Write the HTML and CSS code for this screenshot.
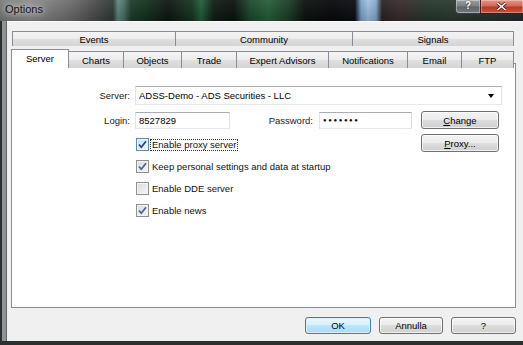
FILE: index.html
```html
<!DOCTYPE html>
<html lang="en">
<head>
  <meta charset="UTF-8" />
  <title>Options</title>
  <link rel="stylesheet" href="styles.css">
</head>
<body>

  <div class="window">
    <div class="titlebar">
      <span class="title">Options</span>
      <div class="caption-buttons">
        <span class="cap-help">?</span>
        <span class="cap-close">
          <svg width="11" height="9" viewBox="0 0 11 9">
            <path d="M1.5 1 L9.5 8 M9.5 1 L1.5 8" stroke="#5a1a12" stroke-width="3" />
            <path d="M1.5 1 L9.5 8 M9.5 1 L1.5 8" stroke="#fff" stroke-width="1.6" />
          </svg>
        </span>
      </div>
    </div>

    <div class="frame">
      <div class="client">

        <div class="tabs">
          <div class="tab-row upper">
            <div class="tab w-events">Events</div>
            <div class="tab w-community">Community</div>
            <div class="tab w-signals last">Signals</div>
          </div>
          <div class="tab-row lower">
            <div class="tab selected w-server">Server</div>
            <div class="tab w-charts">Charts</div>
            <div class="tab w-objects">Objects</div>
            <div class="tab w-trade">Trade</div>
            <div class="tab w-experts">Expert Advisors</div>
            <div class="tab w-notify">Notifications</div>
            <div class="tab w-email">Email</div>
            <div class="tab w-ftp last">FTP</div>
          </div>
        </div>

        <div class="panel">
          <div class="field-row">
            <span class="label">Server:</span>
            <div class="combo">
              <span class="combo-text">ADSS-Demo - ADS Securities - LLC</span>
              <span class="combo-arrow"></span>
            </div>
          </div>

          <div class="field-row login-row">
            <span class="label">Login:</span>
            <div class="textbox login">8527829</div>
            <span class="label pass-label">Password:</span>
            <div class="textbox password"><span class="dots">●●●●●●●</span></div>
            <button class="btn side-btn"><u>C</u>hange</button>
          </div>

          <div class="lower">
            <div class="checks">
              <div class="check-row">
                <span class="check focused">
                  <svg width="9" height="9" viewBox="0 0 9 9"><path d="M1 4.5 L3.3 7.2 L8 1.2" fill="none" stroke="#2a3f86" stroke-width="1.7" /></svg>
                </span>
                <span class="check-label focus-rect">Enable proxy server</span>
              </div>
              <div class="check-row">
                <span class="check">
                  <svg width="9" height="9" viewBox="0 0 9 9"><path d="M1 4.5 L3.3 7.2 L8 1.2" fill="none" stroke="#4a5d96" stroke-width="1.7" /></svg>
                </span>
                <span class="check-label">Keep personal settings and data at startup</span>
              </div>
              <div class="check-row">
                <span class="check"></span>
                <span class="check-label">Enable DDE server</span>
              </div>
              <div class="check-row">
                <span class="check">
                  <svg width="9" height="9" viewBox="0 0 9 9"><path d="M1 4.5 L3.3 7.2 L8 1.2" fill="none" stroke="#4a5d96" stroke-width="1.7" /></svg>
                </span>
                <span class="check-label">Enable news</span>
              </div>
            </div>
            <button class="btn side-btn proxy"><u>P</u>roxy...</button>
          </div>
        </div>

        <div class="footer">
          <button class="btn foot-btn default w-ok">OK</button>
          <button class="btn foot-btn w-cancel">Annulla</button>
          <button class="btn foot-btn w-help">?</button>
        </div>

      </div>
    </div>
  </div>

</body>
</html>
```

FILE: styles.css
```css
html, body {
  margin: 0;
  padding: 0;
  height: 100%;
  background: #1d2020;
  overflow: hidden;
  font-family: 'Liberation Sans', Arial, sans-serif;
  font-size: 9.5px;
  line-height: 11px;
  color: #000;
}

.window {
  width: 523px;
  height: 345px;
  display: grid;
  grid-template-rows: 21px 1fr;
}

/* glass title bar over the blurred chart */
.titlebar {
  display: flex;
  justify-content: space-between;
  align-items: flex-start;
  overflow: hidden;
  background:
    linear-gradient(180deg, rgba(255, 255, 255, 0.06), rgba(0, 0, 0, 0.18)),
    linear-gradient(90deg,
      #7a7c7b 0px, #8d8e8d 30px, #6d6e6d 70px, #424443 102px,
      #2f3b37 113px, #5d8a80 118px, #4b7068 124px, #1d3d2a 131px,
      #11301c 148px, #0f1612 168px, #163521 192px, #22603a 201px,
      #0f1d14 214px, #0b120e 234px, #1b4a2d 250px, #266039 268px,
      #1b4029 288px, #0c110f 305px, #07090c 330px, #0a0d13 355px,
      #7da4ca 361px, #9fc3e6 368px, #86a9cc 376px, #2b2325 382px,
      #3b2b2c 400px, #26392d 428px, #2b3a31 455px, #222a2b 523px);
}

.title {
  font-size: 11px;
  line-height: 13px;
  color: #151515;
  padding: 3px 0 0 5px;
  text-shadow: 0 0 5px #d8d8d8, 0 0 9px rgba(255, 255, 255, 0.7);
}

.caption-buttons {
  display: flex;
}

.cap-help {
  width: 25px;
  height: 14px;
  box-sizing: border-box;
  border: 1px solid #3a3e40;
  border-top: none;
  border-right: none;
  border-bottom-left-radius: 4px;
  background: linear-gradient(#9aa0a4, #7b8286 45%, #5f666a 55%, #757c80);
  box-shadow: inset 0 0 0 1px rgba(255, 255, 255, 0.35);
  color: #fff;
  font-weight: bold;
  font-size: 10px;
  text-align: center;
  line-height: 12px;
  text-shadow: 0 0 2px #222;
}

.cap-close {
  width: 43px;
  height: 14px;
  box-sizing: border-box;
  border: 1px solid #4a1810;
  border-top: none;
  border-right: none;
  background: linear-gradient(#e09a8a, #cf6a55 45%, #b93a24 55%, #c9533c);
  box-shadow: inset 0 0 0 1px rgba(255, 255, 255, 0.3);
  display: flex;
  align-items: center;
  justify-content: center;
  padding-right: 2px;
}

.frame {
  display: flex;
  padding: 0 0 4px 7px;
  background:
    linear-gradient(#2d3031, #2d3031) bottom / 100% 4px no-repeat,
    linear-gradient(90deg, #2c2f30 0 2px, #8f9497 2px 6px, #5f6365 6px 7px);
}

.client {
  flex: 1;
  background: #f0f0f0;
  border-top: 1px solid #fbfbfb;
  padding: 9px 0 0 4px;
}

/* tabs */
.tabs {
  display: grid;
  grid-template-rows: 15px 17px;
}

.tab-row {
  display: flex;
  align-items: flex-start;
  min-height: 0;
}

.tab-row.upper {
  margin-left: 1px;
}

.tab {
  box-sizing: border-box;
  height: 15px;
  border: 1px solid #898c95;
  border-right: none;
  border-bottom: none;
  display: flex;
  align-items: center;
  justify-content: center;
  background: linear-gradient(#f4f4f4, #ececec 50%, #e0e0e0 50%, #d4d4d4);
}

.lower .tab {
  height: 17px;
}

.tab.last {
  border-right: 1px solid #898c95;
}

.lower .tab.selected {
  position: relative;
  z-index: 1;
  height: 19px;
  margin-top: -2px;
  margin-bottom: -2px;
  padding-bottom: 2px;
  background: #fff;
  border-right: 1px solid #898c95;
}

.tab.selected + .tab {
  border-left: none;
}

.w-events { width: 163px; }
.w-community { width: 177px; }
.w-signals { width: 162px; }
.w-server { width: 58px; }
.w-charts { width: 54px; }
.w-objects { width: 58px; }
.w-trade { width: 55px; }
.w-experts { width: 92px; }
.w-notify { width: 79px; }
.w-email { width: 54px; }
.w-ftp { width: 53px; }

/* page */
.panel {
  width: 505px;
  height: 245px;
  box-sizing: border-box;
  border: 1px solid #898c95;
  background: #fff;
  padding-top: 22px;
}

.field-row {
  display: flex;
  align-items: center;
  height: 19px;
}

.login-row {
  height: 18px;
  margin-top: 6px;
}

.label {
  width: 118px;
  margin-right: 5px;
  text-align: right;
  color: #1a1a1a;
}

.pass-label {
  width: 83px;
  margin-right: 6px;
}

.combo {
  width: 367px;
  height: 19px;
  box-sizing: border-box;
  border: 1px solid;
  border-color: #abadb3 #dbdfe6 #e3e9ef #e2e3ea;
  display: flex;
  align-items: center;
  justify-content: space-between;
  padding-left: 3px;
}

.combo-arrow {
  width: 0;
  height: 0;
  border-top: 4px solid #000;
  border-left: 3.5px solid transparent;
  border-right: 3.5px solid transparent;
  margin-right: 7px;
}

.textbox {
  height: 17px;
  box-sizing: border-box;
  border: 1px solid;
  border-color: #abadb3 #dbdfe6 #e3e9ef #e2e3ea;
  display: flex;
  align-items: center;
  padding-left: 3px;
}

.login {
  width: 95px;
}

.password {
  width: 93px;
}

.dots {
  font-size: 6px;
  letter-spacing: 1.6px;
  color: #111;
}

.btn {
  box-sizing: border-box;
  padding: 0;
  font: inherit;
  color: #000;
  border: 1px solid #707070;
  border-radius: 3px;
  background: linear-gradient(#f3f3f3, #ebebeb 50%, #dddddd 50%, #cfcfcf);
  box-shadow: inset 0 0 0 1px rgba(255, 255, 255, 0.7);
}

.side-btn {
  width: 78px;
  height: 18px;
  margin-left: 9px;
}

.lower {
  display: flex;
  align-items: flex-start;
  margin-top: 5px;
}

.checks {
  display: flex;
  flex-direction: column;
  gap: 9px;
  margin-left: 124px;
  padding-top: 4px;
}

.check-row {
  display: flex;
  align-items: center;
  height: 13px;
}

.check {
  width: 13px;
  height: 13px;
  flex: none;
  box-sizing: border-box;
  border: 1px solid #8e8f8f;
  background: linear-gradient(135deg, #d8dadd, #f7f7f7);
  box-shadow: inset 0 0 0 1px #f4f4f4;
  display: flex;
  align-items: center;
  justify-content: center;
}

.check.focused {
  border-color: #5b8cb8;
  background: linear-gradient(135deg, #c6dff2, #eef6fc);
}

.check-label {
  margin-left: 3px;
  color: #111;
}

.focus-rect {
  margin-left: 1px;
  padding: 0 1px;
  line-height: 10px;
  border: 1px dotted #333;
}

.proxy {
  margin-left: auto;
  margin-right: 16px;
}

/* dialog buttons */
.footer {
  display: flex;
  justify-content: flex-end;
  gap: 8px;
  margin-top: 9px;
  padding-right: 7px;
}

.foot-btn {
  height: 17px;
}

.foot-btn.default {
  border-color: #3c7fb1;
  background: linear-gradient(#eaf6fd, #d9f0fc 50%, #bee6fd 50%, #a7d9f5);
  box-shadow: inset 0 0 0 1px #d8f0fb;
}

.w-ok { width: 66px; }
.w-cancel { width: 64px; }
.w-help { width: 65px; }
```
